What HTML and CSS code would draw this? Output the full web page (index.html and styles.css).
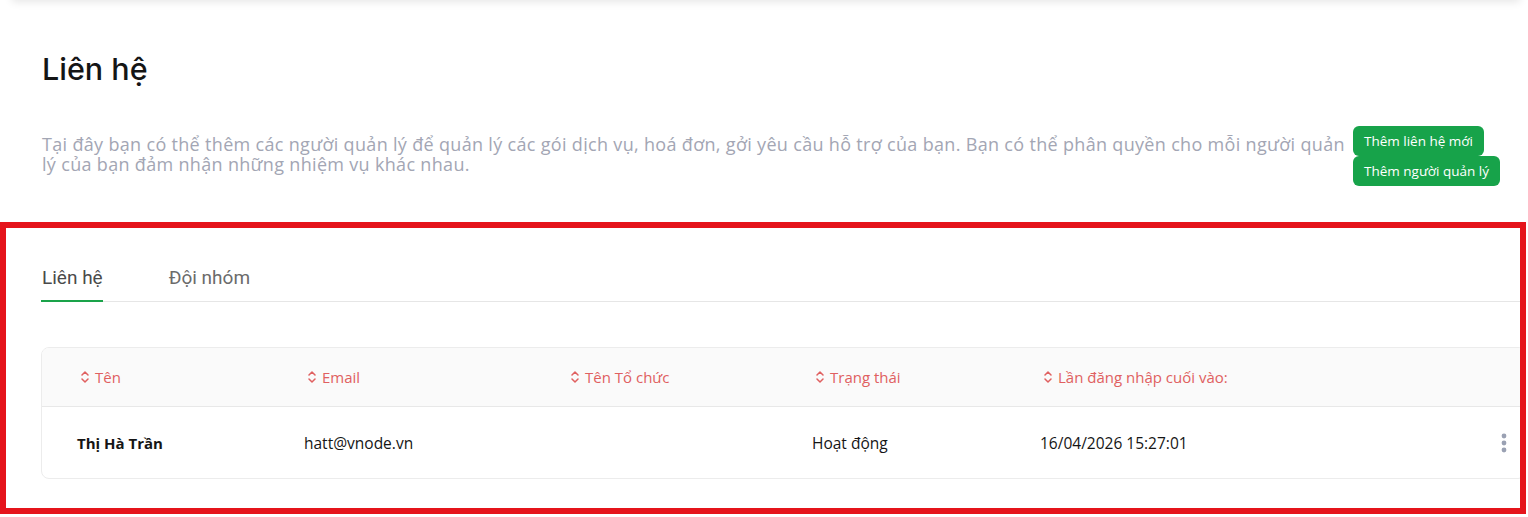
FILE: index.html
```html
<!DOCTYPE html>
<html lang="vi">
<head>
<meta charset="utf-8">
<title>Liên hệ</title>
<link rel="stylesheet" href="styles.css">
</head>
<body>
<div class="topbar"></div>
<main class="page">
  <h1 class="title">Liên hệ</h1>
  <div class="intro">
    <p class="intro-text">Tại đây bạn có thể thêm các người quản lý để quản lý các gói dịch vụ, hoá đơn, gởi yêu cầu hỗ trợ của bạn. Bạn có thể phân quyền cho mỗi người quản lý của bạn đảm nhận những nhiệm vụ khác nhau.</p>
    <div class="actions">
      <button class="btn">Thêm liên hệ mới</button>
      <button class="btn">Thêm người quản lý</button>
    </div>
  </div>

  <section class="panel">
    <nav class="tabs">
      <span class="tab active">Liên hệ</span>
      <span class="tab">Đội nhóm</span>
    </nav>

    <div class="card">
      <div class="row head">
        <div class="th"><svg class="sort" viewBox="0 0 8 14"><path d="M1 5 L4 2 L7 5 M1 9 L4 12 L7 9"/></svg>Tên</div>
        <div class="th"><svg class="sort" viewBox="0 0 8 14"><path d="M1 5 L4 2 L7 5 M1 9 L4 12 L7 9"/></svg>Email</div>
        <div class="th"><svg class="sort" viewBox="0 0 8 14"><path d="M1 5 L4 2 L7 5 M1 9 L4 12 L7 9"/></svg>Tên Tổ chức</div>
        <div class="th"><svg class="sort" viewBox="0 0 8 14"><path d="M1 5 L4 2 L7 5 M1 9 L4 12 L7 9"/></svg>Trạng thái</div>
        <div class="th"><svg class="sort" viewBox="0 0 8 14"><path d="M1 5 L4 2 L7 5 M1 9 L4 12 L7 9"/></svg>Lần đăng nhập cuối vào:</div>
        <div class="th"></div>
      </div>
      <div class="row body">
        <div class="td name">Thị Hà Trần</div>
        <div class="td">hatt@vnode.vn</div>
        <div class="td"></div>
        <div class="td">Hoạt động</div>
        <div class="td">16/04/2026 15:27:01</div>
        <div class="td more">
          <svg viewBox="0 0 6 20" class="dots"><circle cx="3" cy="3" r="2.4"/><circle cx="3" cy="10" r="2.4"/><circle cx="3" cy="17" r="2.4"/></svg>
        </div>
      </div>
    </div>

    <div class="highlight"></div>
  </section>
</main>
</body>
</html>
```

FILE: styles.css
```css
* { box-sizing: border-box; }

html, body {
  margin: 0;
  background: #ffffff;
  overflow: hidden;
}

body {
  font-family: "Open Sans", "Noto Sans", sans-serif;
  color: #111;
}

.topbar {
  height: 12px;
  margin: -12px 8px 0 12px;
  background: #fff;
  box-shadow: 0 2px 8px rgba(0, 0, 0, 0.10);
}

.page {
  padding: 0 28px 0 42px;
}

.title {
  margin: 51px 0 0;
  font-family: Inter, "Liberation Sans", sans-serif;
  font-size: 30.5px;
  line-height: 36px;
  font-weight: 500;
  color: #151515;
}

.intro {
  display: flex;
  align-items: flex-start;
  margin-top: 39px;
}

.intro-text {
  flex: 1;
  margin: 0;
  padding-top: 8px;
  font-size: 18px;
  line-height: 20px;
  letter-spacing: 0.32px;
  font-weight: 500;
  color: #a3a6b4;
}

.actions {
  display: flex;
  flex-direction: column;
  align-items: flex-start;
  margin-left: 2px;
}

.btn {
  height: 30px;
  padding: 0 11px;
  border: none;
  border-radius: 6px;
  background: #17a34a;
  color: #fff;
  font-family: "Open Sans", sans-serif;
  font-size: 13.5px;
  font-weight: 500;
  cursor: pointer;
}

.panel {
  position: relative;
  margin: 36px -26px 0 -42px;
  height: 292px;
  padding: 0 0 0 41px;
}

.tabs {
  display: flex;
  gap: 66px;
  padding-top: 43px;
  border-bottom: 1px solid #e6e6e6;
}

.tab {
  font-family: Roboto, "Open Sans", sans-serif;
  font-size: 19px;
  line-height: 25px;
  color: #6b6b6b;
  padding-bottom: 10px;
  margin-bottom: -1px;
  border-bottom: 2px solid transparent;
}

.tab.active {
  color: #4a4a4a;
  border-bottom-color: #1aa34a;
  padding-left: 1px;
}

.card {
  margin-top: 45px;
  border: 1px solid #ececec;
  border-radius: 8px;
  overflow: hidden;
}

.row {
  display: grid;
  grid-template-columns: 227px 263px 245px 228px 1fr 42px;
  padding-left: 35px;
  align-items: center;
}

.row.head {
  height: 59px;
  background: #fafafa;
  border-bottom: 1px solid #e8e8e8;
}

.row.body {
  height: 71px;
}

.th {
  display: flex;
  align-items: center;
  gap: 6px;
  padding-left: 4px;
  font-size: 15px;
  color: #e06060;
}

.sort {
  width: 8px;
  height: 14px;
  fill: none;
  stroke: #e06060;
  stroke-width: 1.5;
  stroke-linecap: round;
  stroke-linejoin: round;
}

.td {
  font-size: 15.5px;
  color: #151515;
}

.td.name {
  font-weight: 700;
  font-size: 15px;
}

.more {
  display: flex;
  justify-content: center;
}

.dots {
  width: 6px;
  height: 20px;
  fill: #9aa1b3;
}

.highlight {
  position: absolute;
  inset: 0;
  border: 6px solid #e5141b;
  pointer-events: none;
}
```
